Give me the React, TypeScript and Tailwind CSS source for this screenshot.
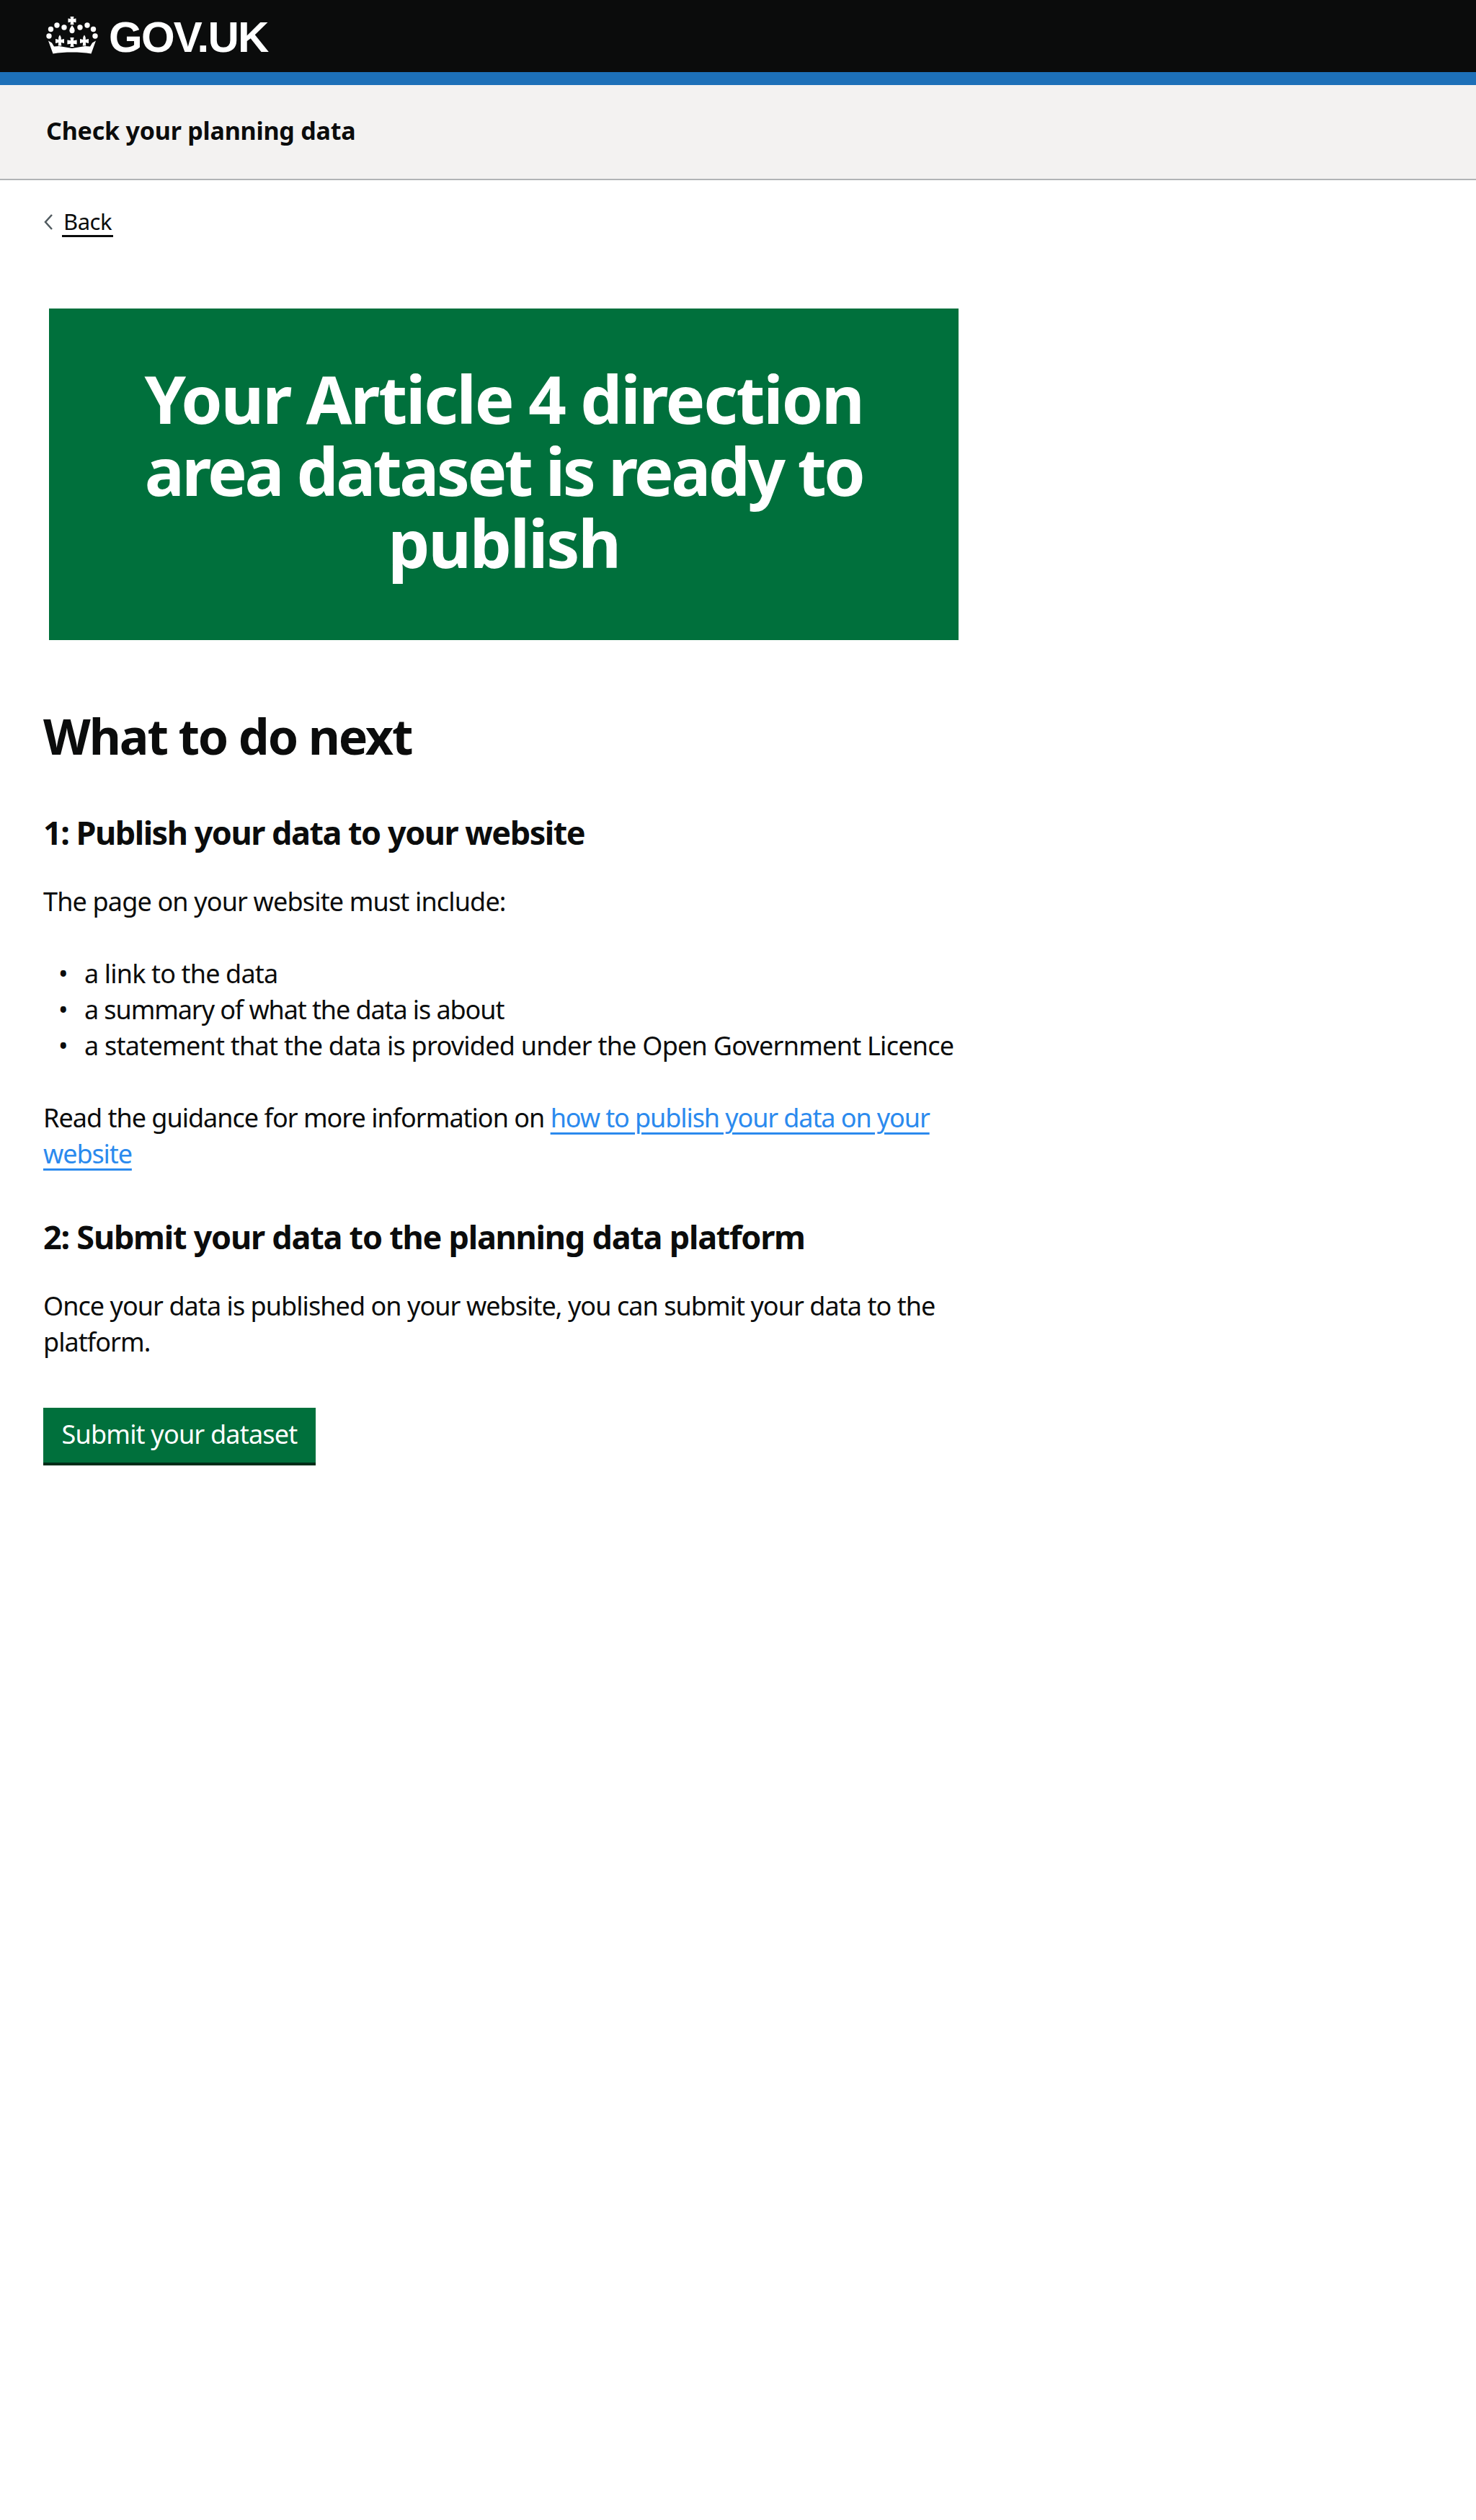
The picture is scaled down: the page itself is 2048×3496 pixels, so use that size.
function Crown() {
  return (
    <svg viewBox="0 0 72 54" className="w-[72px] h-[54px] shrink-0" fill="white">
      {/* pearls */}
      <circle cx="4" cy="27" r="3.700" />
      <circle cx="6.500" cy="17.500" r="3.700" />
      <circle cx="15" cy="12" r="3.700" />
      <circle cx="25" cy="15" r="3.700" />
      <circle cx="47" cy="15" r="3.700" />
      <circle cx="57" cy="12" r="3.700" />
      <circle cx="65.500" cy="17.500" r="3.700" />
      <circle cx="68" cy="27" r="3.700" />
      {/* top cross and drop */}
      <path d="M33.500 0h5l-.6 3.200 3.600-.6v5.600l-3.600-.6.6 3.600h-5l.6-3.600-3.600.6V2.600l3.600.6z" />
      <path d="M36 12c2.400 3 3.600 5.400 3.600 7.500 0 2.300-1.500 3.700-3.600 3.700s-3.600-1.400-3.600-3.700c0-2.100 1.200-4.500 3.600-7.500z" />
      {/* crosses on band */}
      <path d="M33.400 29h5.200l-.8 4.200 4.800-.8v6.200l-4.800-.8.800 4.200h-5.200l.8-4.200-4.800.8v-6.200l4.800.8z" />
      <path d="M19 25.500c1.500 2.200 2.200 4 1.700 6.400l4.300-.8v5.800l-4.200-.8.500 4.400h-4.600l.5-4.400-4.200.8v-5.800l4.300.8c-.5-2.400.2-4.200 1.700-6.400z" />
      <path d="M53 25.500c1.500 2.200 2.200 4 1.700 6.400l4.300-.8v5.800l-4.200-.8.500 4.400h-4.600l.5-4.400-4.200.8v-5.800l4.300.8c-.5-2.400.2-4.200 1.700-6.400z" />
      {/* band */}
      <path d="M3 33.500l5 3 3 5 7-.5 18 3 18-3 7 .5 3-5 5-3-6.500 18c-8.500-1.500-17-2-26.500-2s-18 .5-26.500 2z" />
    </svg>
  );
}

const bodyText = "text-[36px] leading-[50px] tracking-[-0.85px]";
const headingM = "font-bold text-[45px] leading-[60px]";

export default function App() {
  return (
    <div className="min-h-[3496px] bg-white text-[#0b0c0c] font-['Noto_Sans',sans-serif]">
      {/* Header */}
      <header className="h-[100px] bg-[#0b0c0c] flex items-center pl-[64px]">
        <Crown />
        <span className="ml-[15px] pt-[3px] font-['Liberation_Sans',sans-serif] font-bold text-[60px] leading-none text-white tracking-[-1.75px]">GOV.UK</span>
      </header>
      <div className="h-[18px] bg-[#1d70b8]" />
      <div className="h-[132px] bg-[#f3f2f1] border-b-2 border-[#b1b4b6] flex items-center pl-[64px] pb-[4px]">
        <span className="font-bold text-[34px] leading-none tracking-[-0.2px]">Check your planning data</span>
      </div>

      {/* Main column */}
      <main className="pl-[60px] w-[1340px]">
        <a href="#" className="mt-[33px] flex items-center h-[50px] text-[31px] tracking-[-0.5px]">
          <svg viewBox="0 0 14 24" className="w-[14px] h-[24px] shrink-0" fill="none" stroke="#505a5f" strokeWidth="2.500">
            <path d="M12 2L3 12l9 10" />
          </svg>
          <span className="ml-[12px] border-b-[3px] border-[#0b0c0c] px-[2px] leading-[38px]">Back</span>
        </a>

        <div className="mt-[95px] ml-[8px] w-[1262px] h-[460px] bg-[#00703c] text-white text-center px-[96px] pb-[10px] flex items-center justify-center">
          <h1 className="font-bold text-[92px] leading-[100px] tracking-[-2.2px]">
            Your Article 4 direction <span className="tracking-[-3.5px]">area dataset is ready to</span> publish
          </h1>
        </div>

        <h2 className="mt-[93px] font-bold text-[68px] leading-[80px] tracking-[-2.1px]">What to do next</h2>
        <h3 className={`mt-[64px] ${headingM} tracking-[-1.5px]`}>1: Publish your data to your website</h3>
        <p className={`mt-[41px] ${bodyText}`}>The page on your website must include:</p>
        <ul className={`mt-[50px] ${bodyText}`}>
          <li className="flex"><span className="w-[57px] pl-[21px] shrink-0">•</span><span>a link to the data</span></li>
          <li className="flex"><span className="w-[57px] pl-[21px] shrink-0">•</span><span className="tracking-[-1.1px]">a summary of what the data is about</span></li>
          <li className="flex"><span className="w-[57px] pl-[21px] shrink-0">•</span><span className="tracking-[-0.75px]">a statement that the data is provided under the Open Government Licence</span></li>
        </ul>
        <p className={`mt-[50px] ${bodyText} tracking-[-1px]`}>
          Read the guidance for more information on{" "}
          <a href="#" className="text-[#2b8aee] underline underline-offset-[7px] decoration-[3px] tracking-[-1.1px]">how to publish your data on your website</a>
        </p>
        <h3 className={`mt-[60px] ${headingM} tracking-[-1.25px]`}>2: Submit your data to the planning data platform</h3>
        <p className={`mt-[41px] ${bodyText} tracking-[-0.95px]`}>Once your data is published on your website, you can submit your data to the platform.</p>
        <button className="mt-[66px] block w-[378px] h-[76px] bg-[#00703c] text-white text-[36px] tracking-[-0.8px] leading-none shadow-[0_4px_0_#002d18] pb-[2px]">Submit your dataset</button>
      </main>
    </div>
  );
}
